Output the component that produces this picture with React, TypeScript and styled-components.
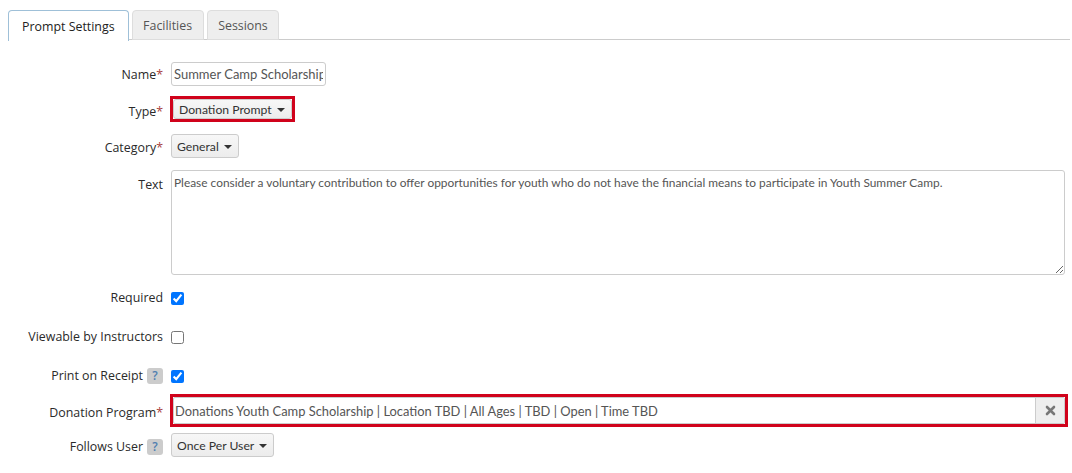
import React from "react";
import styled, { createGlobalStyle } from "styled-components";

const Global = createGlobalStyle`
  html, body { margin: 0; padding: 0; background: #fff; }
  body { font-family: "Open Sans", "Liberation Sans", sans-serif; color: #333; }
  * { box-sizing: border-box; }
`;

const Page = styled.div`
  padding: 10px 2px 0 8px;
  width: 1072px;
  height: 473px;
  overflow: hidden;
`;

const TabBar = styled.div`
  display: flex;
  gap: 3px;
  border-bottom: 1px solid #ccc;
  height: 30px;
`;

const Tab = styled.div<{ $active?: boolean }>`
  height: ${(p) => (p.$active ? "31px" : "30px")};
  padding: 0 ${(p) => (p.$active ? "13px" : "10.5px")};
  display: flex;
  align-items: center;
  font-size: 12.4px;
  color: ${(p) => (p.$active ? "#222" : "#555")};
  background: ${(p) => (p.$active ? "#fff" : "#eee")};
  border: 1px solid ${(p) => (p.$active ? "#9fc0d8" : "#ddd")};
  border-bottom: ${(p) => (p.$active ? "none" : "1px solid #ddd")};
  border-radius: 4px 4px 0 0;
`;

const Form = styled.div`
  display: flex;
  flex-direction: column;
  padding-top: 22px;
`;

const Row = styled.div<{ $mt?: number; $top?: boolean }>`
  display: grid;
  grid-template-columns: 155px 1fr;
  column-gap: 8px;
  align-items: ${(p) => (p.$top ? "start" : "center")};
  margin-top: ${(p) => p.$mt ?? 0}px;
`;

const Label = styled.div<{ $pt?: number }>`
  display: flex;
  justify-content: flex-end;
  align-items: center;
  gap: 4px;
  font-size: 12.4px;
  color: #2a2a2a;
  white-space: nowrap;
  padding-top: ${(p) => p.$pt ?? 0}px;
`;

const Req = styled.span`
  color: #a94442;
`;

const Help = styled.span`
  display: inline-flex;
  align-items: center;
  justify-content: center;
  width: 16px;
  height: 16px;
  border-radius: 3px;
  background: #ccc;
  color: #4f7fb0;
  font-size: 12px;
  font-weight: 600;
`;

const TextInput = styled.input`
  width: 155px;
  height: 24px;
  border: 1px solid #ccc;
  border-radius: 3px;
  padding: 0 2px;
  font-family: Lato, "Liberation Sans", sans-serif;
  font-size: 13px;
  color: #555;
  background: #fff;
  outline: none;
`;

const DropButton = styled.div<{ $h?: number }>`
  display: inline-flex;
  align-items: center;
  gap: 5px;
  height: ${(p) => p.$h ?? 24}px;
  padding: 0 6px 0 5px;
  border: 1px solid #ccc;
  border-radius: 3px;
  background: linear-gradient(#f7f7f7, #ececec);
  font-family: Lato, "Liberation Sans", sans-serif;
  font-size: 12.2px;
  color: #333;
  white-space: nowrap;
`;

const Caret = styled.span`
  width: 0;
  height: 0;
  border-left: 4px solid transparent;
  border-right: 4px solid transparent;
  border-top: 4px solid #333;
  margin-top: 1px;
`;

const Highlight = styled.div<{ $block?: boolean }>`
  display: ${(p) => (p.$block ? "flex" : "inline-flex")};
  flex: ${(p) => (p.$block ? "1" : "none")};
  border: 3px solid #d0021b;
  margin-left: -1px;
  justify-self: start;
`;

const TextArea = styled.textarea`
  width: 894px;
  height: 105px;
  border: 1px solid #ccc;
  border-radius: 3px;
  padding: 4px 2px;
  font-family: Lato, "Liberation Sans", sans-serif;
  font-size: 11.9px;
  color: #555;
  resize: vertical;
  outline: none;
  display: block;
`;

const Check = styled.input`
  width: 13px;
  height: 13px;
  margin: 0;
  accent-color: #0075ff;
`;

const CheckCell = styled.div`
  display: flex;
  align-items: center;
  height: 16px;
  padding-top: 2px;
`;

const Select2 = styled.div`
  flex: 1;
  display: flex;
  height: 27px;
  background: #fff;
  border: 1px solid #ccc;
  border-radius: 2px;
`;

const Select2Text = styled.div`
  flex: 1;
  display: flex;
  align-items: center;
  padding-left: 1px;
  font-family: Lato, "Liberation Sans", sans-serif;
  font-size: 12.9px;
  color: #555;
  white-space: nowrap;
`;

const ClearBtn = styled.div`
  width: 29px;
  display: flex;
  align-items: center;
  justify-content: center;
  background: #eee;
  border-left: 1px solid #ccc;
`;

const InlineStart = styled.div`
  justify-self: start;
  display: flex;
`;

const DonationWrap = styled.div`
  display: flex;
  margin-right: 2px;
`;

export default function App() {
  return (
    <>
      <Global />
      <Page>
        <TabBar>
          <Tab $active>Prompt Settings</Tab>
          <Tab>Facilities</Tab>
          <Tab>Sessions</Tab>
        </TabBar>
        <Form>
          <Row>
            <Label>
              <span>
                Name<Req>*</Req>
              </span>
            </Label>
            <InlineStart>
              <TextInput readOnly value="Summer Camp Scholarship" />
            </InlineStart>
          </Row>
          <Row $mt={10}>
            <Label $pt={5}>
              <span>
                Type<Req>*</Req>
              </span>
            </Label>
            <Highlight>
              <DropButton $h={20}>
                Donation Prompt <Caret />
              </DropButton>
            </Highlight>
          </Row>
          <Row $mt={12}>
            <Label $pt={3}>
              <span>
                Category<Req>*</Req>
              </span>
            </Label>
            <InlineStart>
              <DropButton>
                General <Caret />
              </DropButton>
            </InlineStart>
          </Row>
          <Row $mt={12} $top>
            <Label $pt={6}>Text</Label>
            <TextArea
              readOnly
              value="Please consider a voluntary contribution to offer opportunities for youth who do not have the financial means to participate in Youth Summer Camp."
            />
          </Row>
          <Row $mt={14}>
            <Label>Required</Label>
            <CheckCell>
              <Check type="checkbox" defaultChecked />
            </CheckCell>
          </Row>
          <Row $mt={22}>
            <Label>Viewable by Instructors</Label>
            <CheckCell>
              <Check type="checkbox" />
            </CheckCell>
          </Row>
          <Row $mt={22}>
            <Label>
              Print on Receipt <Help>?</Help>
            </Label>
            <CheckCell>
              <Check type="checkbox" defaultChecked />
            </CheckCell>
          </Row>
          <Row $mt={10}>
            <Label $pt={4}>
              <span>
                Donation Program<Req>*</Req>
              </span>
            </Label>
            <DonationWrap>
              <Highlight $block>
                <Select2>
                  <Select2Text>
                    Donations Youth Camp Scholarship | Location TBD | All Ages | TBD | Open | Time TBD
                  </Select2Text>
                  <ClearBtn>
                    <svg width="11" height="11" viewBox="0 0 11 11">
                      <path d="M2 2 L9 9 M9 2 L2 9" stroke="#777" strokeWidth="2.6" strokeLinecap="round" />
                    </svg>
                  </ClearBtn>
                </Select2>
              </Highlight>
            </DonationWrap>
          </Row>
          <Row $mt={6}>
            <Label $pt={3}>
              Follows User <Help>?</Help>
            </Label>
            <InlineStart>
              <DropButton>
                Once Per User <Caret />
              </DropButton>
            </InlineStart>
          </Row>
        </Form>
      </Page>
    </>
  );
}
